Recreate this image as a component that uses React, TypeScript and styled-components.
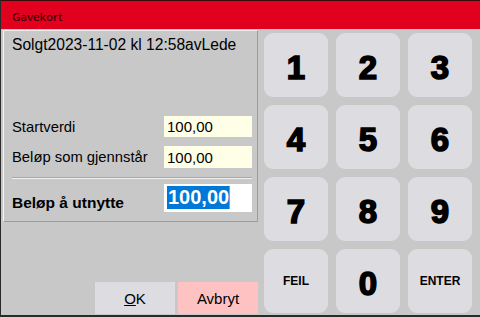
import React from 'react';
import styled, { createGlobalStyle } from 'styled-components';

const Global = createGlobalStyle`
    html, body {
        margin: 0;
        padding: 0;
        background: #c8c8c8;
    }
    * {
        box-sizing: border-box;
    }
`;

const Window = styled.div`
    width: 480px;
    height: 317px;
    display: flex;
    flex-direction: column;
    background: #c8c8c8;
    border-left: 1px solid #2a2a2a;
    border-bottom: 2px solid #2a2a2a;
    font-family: "Liberation Sans", Arial, sans-serif;
    color: #000;
    overflow: hidden;
`;

const TitleBar = styled.div`
    height: 29px;
    flex: none;
    display: flex;
    align-items: center;
    padding: 2px 0 0 11px;
    background: #e2001f;
    border-top: 1px solid #3a0a0a;
    font-family: "Noto Sans", "Open Sans", sans-serif;
    font-size: 11.5px;
    font-weight: 500;
    color: #420008;
`;

const Body = styled.div`
    flex: 1;
    display: flex;
    gap: 6px;
`;

const LeftColumn = styled.div`
    width: 257px;
    display: flex;
    flex-direction: column;
    padding: 1px 0 0 2px;
`;

const Panel = styled.div`
    height: 192px;
    border-top: 1px solid #f4f4f4;
    border-left: 1px solid #f4f4f4;
    border-right: 1px solid #9c9c9c;
    border-bottom: 1px solid #9c9c9c;
    padding: 5px 5px 0 8px;
    display: flex;
    flex-direction: column;
`;

const SoldText = styled.div`
    font-size: 15.6px;
    line-height: 18px;
    margin-bottom: 62px;
`;

const Row = styled.div<{ $tall?: boolean }>`
    display: flex;
    align-items: center;
    justify-content: space-between;
    height: ${p => (p.$tall ? 30 : 23)}px;
    margin-bottom: 9px;
`;

const Label = styled.span<{ $bold?: boolean }>`
    font-size: ${p => (p.$bold ? 15.5 : 14.8)}px;
    font-weight: ${p => (p.$bold ? 700 : 400)};
    padding-top: ${p => (p.$bold ? 10 : 0)}px;
`;

const Field = styled.div<{ $white?: boolean }>`
    width: 88px;
    height: 100%;
    display: flex;
    align-items: center;
    padding-left: 3px;
    background: ${p => (p.$white ? '#ffffff' : '#ffffe8')};
    font-size: 15px;
`;

const Selected = styled.span`
    background: #0078d7;
    color: #fff;
    font-size: 20px;
    font-weight: 700;
    line-height: 23px;
    padding-left: 1px;
    border-right: 1px solid #e08a30;
`;

const Separator = styled.div`
    height: 2px;
    margin: 0 0 5px 0;
    border-top: 1px solid #a8a8a8;
    border-bottom: 1px solid #f0f0f0;
`;

const Actions = styled.div`
    margin-top: auto;
    margin-bottom: 1px;
    display: flex;
    justify-content: flex-end;
    gap: 3px;
`;

const ActionButton = styled.button<{ $cancel?: boolean }>`
    width: 80px;
    height: 32px;
    border: none;
    padding: 0;
    background: ${p => (p.$cancel ? '#ffc2c2' : '#dddce1')};
    font-family: "Liberation Sans", Arial, sans-serif;
    font-size: 15px;
    color: #000;
`;

const Keypad = styled.div`
    display: grid;
    grid-template-columns: repeat(3, 64px);
    grid-auto-rows: 64px;
    gap: 8px;
    padding-top: 4px;
`;

const Key = styled.button<{ $small?: boolean }>`
    border: none;
    border-radius: 9px;
    background: #dddce1;
    padding: ${p => (p.$small ? 0 : '5px')} 0 0 0;
    font-family: "Liberation Sans", Arial, sans-serif;
    font-weight: 700;
    font-size: ${p => (p.$small ? 12 : 33)}px;
    -webkit-text-stroke: ${p => (p.$small ? 0 : 1.6)}px #000;
    color: #000;
`;

const keys = ['1', '2', '3', '4', '5', '6', '7', '8', '9', 'FEIL', '0', 'ENTER'];

const App = () => {
    return (
        <>
            <Global />
            <Window>
                <TitleBar>Gavekort</TitleBar>
                <Body>
                    <LeftColumn>
                        <Panel>
                            <SoldText>Solgt2023-11-02 kl 12:58avLede</SoldText>
                            <Row>
                                <Label>Startverdi</Label>
                                <Field>100,00</Field>
                            </Row>
                            <Row>
                                <Label>Beløp som gjennstår</Label>
                                <Field>100,00</Field>
                            </Row>
                            <Separator />
                            <Row $tall>
                                <Label $bold>Beløp å utnytte</Label>
                                <Field $white>
                                    <Selected>100,00</Selected>
                                </Field>
                            </Row>
                        </Panel>
                        <Actions>
                            <ActionButton><u>O</u>K</ActionButton>
                            <ActionButton $cancel>Avbryt</ActionButton>
                        </Actions>
                    </LeftColumn>
                    <Keypad>
                        {keys.map(k => (
                            <Key key={k} $small={k.length > 1}>{k}</Key>
                        ))}
                    </Keypad>
                </Body>
            </Window>
        </>
    );
};

export default App;
